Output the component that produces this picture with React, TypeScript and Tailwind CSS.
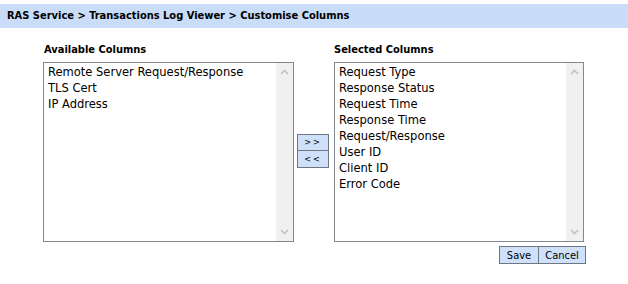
import React from "react";

const available = ["Remote Server Request/Response", "TLS Cert", "IP Address"];
const selected = [
  "Request Type",
  "Response Status",
  "Request Time",
  "Response Time",
  "Request/Response",
  "User ID",
  "Client ID",
  "Error Code",
];

function Chevron({ up }: { up?: boolean }) {
  return (
    <svg width="9" height="6" viewBox="0 0 9 6" className="block">
      <path
        d={up ? "M1 5 L4.5 1.5 L8 5" : "M1 1 L4.5 4.5 L8 1"}
        fill="none"
        stroke="#c2c2c2"
        strokeWidth="1.6"
      />
    </svg>
  );
}

function ListBox({ items }: { items: string[] }) {
  return (
    <div className="flex h-[180px] border border-[#828790] bg-white">
      <div className="flex-1 pl-[4px] pt-[1px] text-[12.8px] leading-[16px] text-black">
        {items.map((it) => (
          <div key={it}>{it}</div>
        ))}
      </div>
      <div className="flex w-[17px] flex-col items-center justify-between bg-[#f0f0f0] py-[6px]">
        <Chevron up />
        <Chevron />
      </div>
    </div>
  );
}

export default function App() {
  return (
    <div
      className="h-[284px] w-[628px] bg-white pt-[4px]"
      style={{ fontFamily: '"DejaVu Sans Condensed", "DejaVu Sans", sans-serif' }}
    >
      <div className="flex h-[24px] items-center bg-[#c9dcf8] pl-[7px] text-[11px] font-bold text-black">
        RAS Service &gt; Transactions Log Viewer &gt; Customise Columns
      </div>

      <div className="flex pl-[43px] pt-[14px]">
        <div className="w-[251px]">
          <div className="mb-[4px] pl-[1px] text-[11px] font-bold leading-[16px]">Available Columns</div>
          <ListBox items={available} />
        </div>

        <div className="mt-[20px] flex h-[180px] w-[40px] flex-col justify-center pb-[2px] pl-[3px]">
          <button className="h-[17px] w-[32px] border border-[#6f7680] bg-[#cfe0fb] text-[9px] leading-none tracking-[2px] text-black">
            &gt;&gt;
          </button>
          <button className="h-[17px] w-[32px] border border-t-0 border-[#6f7680] bg-[#cfe0fb] text-[9px] leading-none tracking-[2px] text-black">
            &lt;&lt;
          </button>
        </div>

        <div className="w-[250px]">
          <div className="mb-[4px] text-[11px] font-bold leading-[16px]">Selected Columns</div>
          <ListBox items={selected} />
          <div className="mr-[-2px] mt-[4px] flex justify-end">
            <button className="h-[18px] w-[40px] border border-[#6f7680] bg-[#cfe0fb] text-[11px] leading-none text-black">
              Save
            </button>
            <button className="h-[18px] w-[47px] border border-l-0 border-[#6f7680] bg-[#cfe0fb] text-[11px] leading-none text-black">
              Cancel
            </button>
          </div>
        </div>
      </div>
    </div>
  );
}
